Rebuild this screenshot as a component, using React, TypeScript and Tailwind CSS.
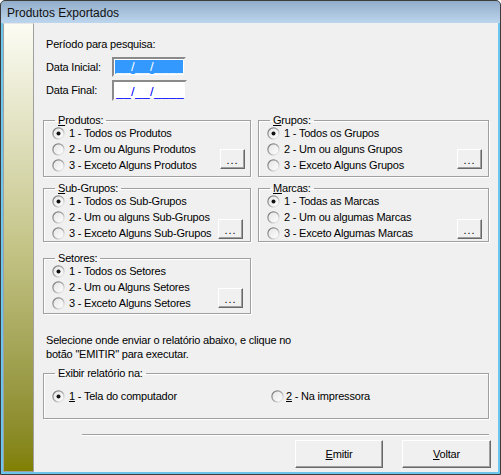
import React from 'react';

const FONT = { fontFamily: '"Liberation Sans", Arial, sans-serif' };

const Radio: React.FC<{ checked?: boolean }> = ({ checked }) => (
    <svg width="13" height="13" viewBox="0 0 13 13" className="shrink-0">
        <defs>
            <linearGradient id="rb" x1="0" y1="0" x2="1" y2="1">
                <stop offset="0" stopColor="#6e6e6e" />
                <stop offset="0.5" stopColor="#a5a5a5" />
                <stop offset="1" stopColor="#ffffff" />
            </linearGradient>
            <linearGradient id="rf" x1="0" y1="0" x2="1" y2="1">
                <stop offset="0" stopColor="#e4e4e4" />
                <stop offset="1" stopColor="#ffffff" />
            </linearGradient>
        </defs>
        <circle cx="6.5" cy="6.5" r="5.6" fill="url(#rf)" stroke="url(#rb)" strokeWidth="1.2" />
        {checked && <circle cx="6.5" cy="6.5" r="2" fill="#111" />}
    </svg>
);

const Accel: React.FC<{ text: string; accel?: boolean }> = ({ text, accel }) =>
    accel ? (
        <>
            <span className="underline underline-offset-[1px]">{text[0]}</span>
            {text.slice(1)}
        </>
    ) : (
        <>{text}</>
    );

const SmallButton = () => (
    <button className="w-[25px] h-[20px] bg-[#f0f0f0] border border-t-white border-l-white border-r-[#696969] border-b-[#696969] shadow-[inset_-1px_-1px_0_#a0a0a0] text-[11px] leading-[14px] pt-[2px] tracking-[1px]">
        ...
    </button>
);

interface GroupBoxProps {
    legend: string;
    accel?: boolean;
    options: string[];
    bodyClass: string;
    buttonClass: string;
}

const GroupBox: React.FC<GroupBoxProps> = ({ legend, accel, options, bodyClass, buttonClass }) => (
    <fieldset className="border border-[#a0a0a0] shadow-[inset_1px_1px_0_#ffffff,1px_1px_0_#ffffff]">
        <legend className="ml-[11px] px-[3px] leading-[10px]">
            <Accel text={legend} accel={accel} />
        </legend>
        <div className={`flex items-end pl-[8px] pr-[5px] ${bodyClass}`}>
            <div className="flex-1">
                {options.map((opt, i) => (
                    <div key={opt} className="flex items-center h-[16px] gap-[4px]">
                        <Radio checked={i === 0} />
                        <span className="leading-[14px]">{opt}</span>
                    </div>
                ))}
            </div>
            <div className={buttonClass}>
                <SmallButton />
            </div>
        </div>
    </fieldset>
);

const WinButton: React.FC<{ label: string; className: string }> = ({ label, className }) => (
    <button className={`h-[28px] bg-[#f0f0f0] border border-t-white border-l-white border-r-[#696969] border-b-[#696969] shadow-[inset_-1px_-1px_0_#a0a0a0] text-[11px] ${className}`}>
        <Accel text={label} accel />
    </button>
);

export default function App() {
    return (
        <div
            className="w-[501px] h-[475px] flex flex-col border border-[#3c3c3c] rounded-t-[5px] overflow-hidden bg-[#3c3c3c] text-[11px] tracking-[-0.2px] text-black"
            style={FONT}
        >
            {/* title bar */}
            <div className="h-[22px] shrink-0 flex items-center pl-[6px] pt-[1px] bg-gradient-to-b from-[#92adca] to-[#bdd6ee] text-[12px] tracking-normal text-[#111]">
                Produtos Exportados
            </div>

            <div className="flex-1 flex bg-[#f0f0f0] border-l-2 border-r-2 border-b-2 border-[#6cc5ec]">
                {/* left gradient strip */}
                <div className="w-[31px] shrink-0 border border-[#a0a0a0] border-t-[#e8e8e8] bg-gradient-to-b from-[#fcfcf4] via-[#c4c487] to-[#808000]" />

                {/* content */}
                <div className="flex-1 pl-[9px]">
                    <div className="mt-[14px] pl-[3px] leading-[14px]">Período para pesquisa:</div>

                    <div className="mt-[6px] pl-[3px] flex items-center h-[20px]">
                        <span className="w-[66px]">Data Inicial:</span>
                        <div className="w-[74px] h-[20px] bg-white border-2 border-t-[#8a8a8a] border-l-[#8a8a8a] border-r-[#f0f0f0] border-b-[#f0f0f0] p-[1px]">
                            <div className="h-full bg-[#3399ff] flex items-end text-white text-[13px] leading-[14px] tracking-[0.3px] pl-[1px]">
                                <span className="flex-1">__/__/____</span>
                                <span className="w-[1px] h-[13px] bg-[#d9822b] mb-[1px] mr-[1px]" />
                            </div>
                        </div>
                    </div>

                    <div className="mt-[3px] pl-[3px] flex items-center h-[21px]">
                        <span className="w-[66px]">Data Final:</span>
                        <div className="w-[75px] h-[21px] bg-white border-2 border-t-[#8a8a8a] border-l-[#8a8a8a] border-r-[#f0f0f0] border-b-[#f0f0f0] flex items-end pl-[2px] text-[#0000ff] text-[13px] leading-[14px] tracking-[0.3px]">
                            __/__/____
                        </div>
                    </div>

                    <div className="mt-[14px] grid grid-cols-[208px_231px] gap-x-[7px]">
                        <GroupBox
                            legend="Produtos:"
                            accel
                            options={['1 - Todos os Produtos', '2 - Um ou Alguns Produtos', '3 - Exceto Alguns Produtos']}
                            bodyClass="pb-[3px]"
                            buttonClass="mb-[4px]"
                        />
                        <GroupBox
                            legend="Grupos:"
                            accel
                            options={['1 - Todos os Grupos', '2 - Um ou alguns Grupos', '3 - Exceto Alguns Grupos']}
                            bodyClass="pb-[3px] pr-[6px]"
                            buttonClass="mb-[4px]"
                        />
                    </div>

                    <div className="mt-[6px] grid grid-cols-[208px_231px] gap-x-[7px]">
                        <GroupBox
                            legend="Sub-Grupos:"
                            accel
                            options={['1 - Todos os Sub-Grupos', '2 - Um ou alguns Sub-Grupos', '3 - Exceto Alguns Sub-Grupos']}
                            bodyClass="pb-0 pr-[7px]"
                            buttonClass="mb-[2px]"
                        />
                        <GroupBox
                            legend="Marcas:"
                            accel
                            options={['1 - Todas as Marcas', '2 - Um ou algumas Marcas', '3 - Exceto Algumas Marcas']}
                            bodyClass="pb-0 pr-[6px]"
                            buttonClass="mb-[2px]"
                        />
                    </div>

                    <div className="mt-[11px] grid grid-cols-[208px_231px] gap-x-[7px]">
                        <GroupBox
                            legend="Setores:"
                            options={['1 - Todos os Setores', '2 - Um ou Alguns Setores', '3 - Exceto Alguns Setores']}
                            bodyClass="pb-[2px] pr-[7px]"
                            buttonClass="mb-[3px]"
                        />
                    </div>

                    <div className="mt-[19px] pl-[3px] leading-[14px]">
                        Selecione onde enviar o relatório abaixo, e clique no
                        <br />
                        botão "EMITIR" para executar.
                    </div>

                    <fieldset className="mt-[7px] w-[446px] border border-[#a0a0a0] shadow-[inset_1px_1px_0_#ffffff,1px_1px_0_#ffffff]">
                        <legend className="ml-[11px] px-[3px] leading-[10px]">Exibir relatório na:</legend>
                        <div className="flex items-center h-[16px] mt-[10px] mb-[14px] pl-[8px]">
                            <div className="w-[219px] flex items-center gap-[4px]">
                                <Radio checked />
                                <span>
                                    <Accel text="1 - Tela do computador" accel />
                                </span>
                            </div>
                            <div className="flex items-center gap-[2px]">
                                <Radio />
                                <span>
                                    <Accel text="2 - Na impressora" accel />
                                </span>
                            </div>
                        </div>
                    </fieldset>

                    <div className="mt-[15px] ml-[39px] w-[407px] h-[2px] border-t border-[#a0a0a0] border-b border-b-white" />

                    <div className="mt-[4px] ml-[252px] flex gap-[19px]">
                        <WinButton label="Emitir" className="w-[88px]" />
                        <WinButton label="Voltar" className="w-[89px]" />
                    </div>
                </div>
            </div>
        </div>
    );
}
